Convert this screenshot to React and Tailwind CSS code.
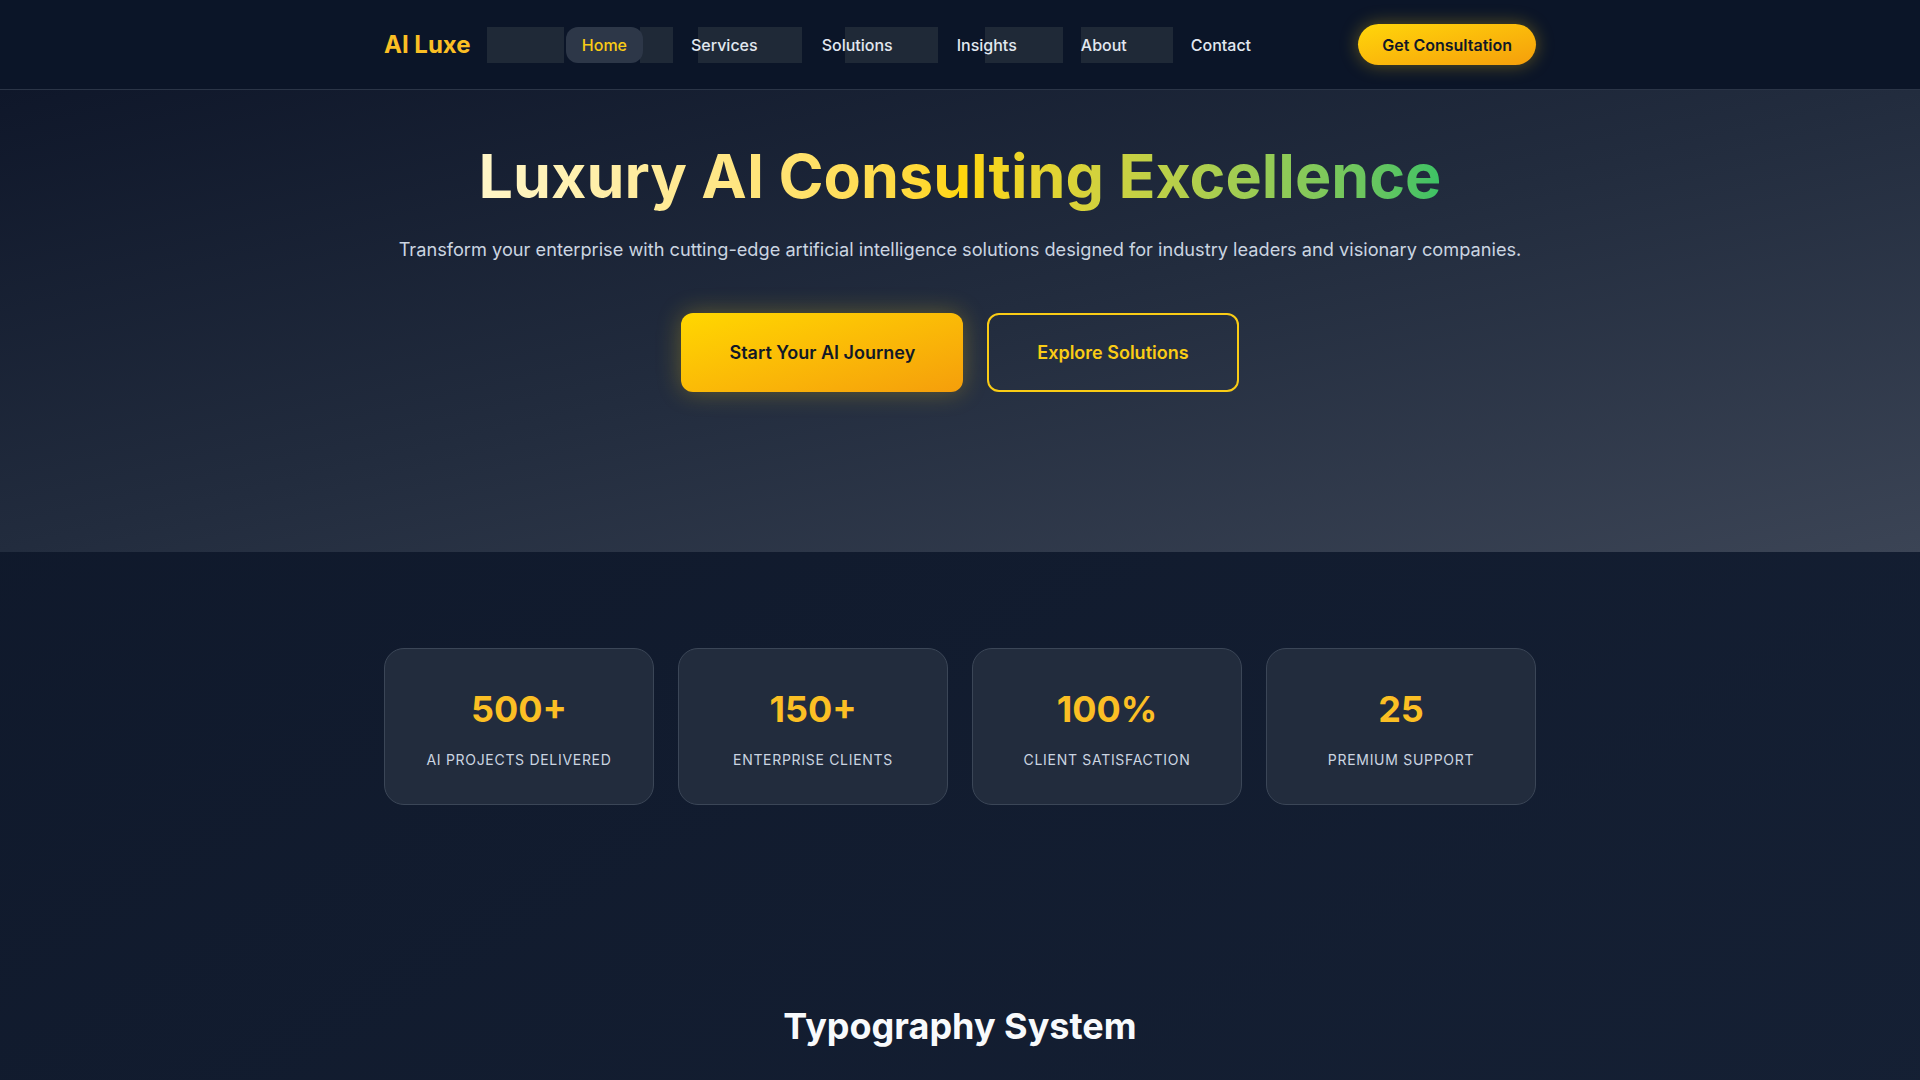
import React from 'react';

const links = ['Home', 'Services', 'Solutions', 'Insights', 'About', 'Contact'];

const stats = [
  { value: '500+', label: 'AI Projects Delivered' },
  { value: '150+', label: 'Enterprise Clients' },
  { value: '100%', label: 'Client Satisfaction' },
  { value: '25', label: 'Premium Support' },
];

const Navbar = () => {
  return (
    <header className="bg-[#0b1528] border-b border-[#2b3547]">
      <div className="max-w-6xl mx-auto h-[89px] flex items-center justify-between">
        <a href="#" className="text-2xl font-bold text-[#fbbf24]">
          AI Luxe
        </a>

        <nav className="relative ml-[4px] flex items-center gap-8">
          <span className="absolute top-0 h-9 left-[-79px] w-[77px] bg-[#1f2937]" />
          <span className="absolute top-0 h-9 left-[74px] w-[33px] bg-[#1f2937]" />
          <span className="absolute top-0 h-9 left-[132px] w-[104px] bg-[#1f2937]" />
          <span className="absolute top-0 h-9 left-[279px] w-[93px] bg-[#1f2937]" />
          <span className="absolute top-0 h-9 left-[419px] w-[78px] bg-[#1f2937]" />
          <span className="absolute top-0 h-9 left-[515px] w-[92px] bg-[#1f2937]" />

          {links.map((link, i) => (
            <a
              key={link}
              href="#"
              className={`relative h-9 flex items-center px-4 rounded-xl text-base font-medium ${
                i === 0 ? 'bg-[#2d3748] text-[#facc15]' : 'text-[#e2e8f0]'
              }`}
            >
              {link}
            </a>
          ))}
        </nav>

        <button className="h-[41px] px-6 rounded-full bg-gradient-to-br from-[#ffd60a] to-[#f59e0b] text-[#111827] text-base font-semibold shadow-[0_0_18px_rgba(250,204,21,0.35)]">
          Get Consultation
        </button>
      </div>
    </header>
  );
};

const Hero = () => {
  return (
    <section className="bg-gradient-to-br from-[#0f172a] via-[#222c3e] to-[#3b4455] pt-[56px] pb-40">
      <div className="max-w-6xl mx-auto flex flex-col items-center text-center">
        <h1 className="text-[61px] leading-none font-bold bg-gradient-to-r from-[#fff6c8] via-[#ffd60a] to-[#3cc265] bg-clip-text text-transparent pb-2">
          Luxury AI Consulting Excellence
        </h1>
        <p className="mt-5 text-[18.2px] leading-7 text-[#cbd5e1]">
          Transform your enterprise with cutting-edge artificial intelligence solutions designed for industry leaders and visionary companies.
        </p>
        <div className="mt-[50px] flex items-center gap-6">
          <button className="h-[79px] px-12 rounded-xl bg-gradient-to-br from-[#ffd700] to-[#f59e0b] text-[#111827] text-lg font-semibold shadow-[0_0_24px_rgba(250,204,21,0.3)]">
            Start Your AI Journey
          </button>
          <button className="h-[79px] px-12 rounded-xl border-2 border-[#facc15] text-[#facc15] text-lg font-semibold">
            Explore Solutions
          </button>
        </div>
      </div>
    </section>
  );
};

const Stats = () => {
  return (
    <section className="py-24">
      <div className="max-w-6xl mx-auto grid grid-cols-4 gap-6">
        {stats.map((stat) => (
          <div
            key={stat.label}
            className="rounded-[20px] border border-[#3b4657] bg-[#222c3d] pt-10 pb-[34px] text-center"
          >
            <div className="text-4xl font-bold leading-10 text-[#fbbf24]">{stat.value}</div>
            <div className="mt-[21px] text-sm leading-5 uppercase tracking-wider text-[#cbd5e1]">
              {stat.label}
            </div>
          </div>
        ))}
      </div>
    </section>
  );
};

export default function App() {
  return (
    <div className="min-h-screen bg-gradient-to-br from-[#0e1729] to-[#152034] font-['Inter','Noto_Sans',sans-serif] antialiased">
      <Navbar />
      <Hero />
      <Stats />
      <section className="pt-[105px] pb-24">
        <h2 className="text-center text-4xl leading-10 font-bold text-[#f8fafc]">
          Typography System
        </h2>
      </section>
    </div>
  );
}
